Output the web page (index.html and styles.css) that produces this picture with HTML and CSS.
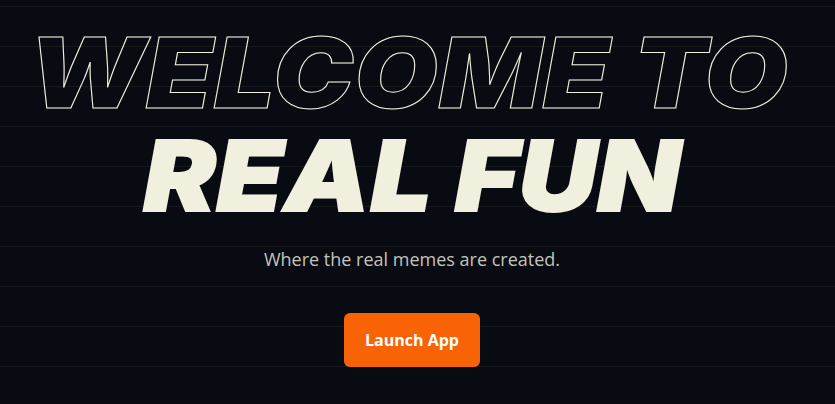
FILE: index.html
```html
<!DOCTYPE html>
<html lang="en">
<head>
<meta charset="utf-8">
<title>Real Fun</title>
<link rel="stylesheet" href="styles.css">
</head>
<body>
<main class="hero">
  <h1 class="title">
    <span class="line outline">WELCOME TO</span>
    <span class="line solid">REAL FUN</span>
  </h1>
  <p class="tagline">Where the real memes are created.</p>
  <a class="cta" href="#">Launch App</a>
</main>
</body>
</html>
```
FILE: styles.css
```css
* { box-sizing: border-box; }
html, body { margin: 0; height: 100%; }
body {
  background-color: #080b11;
  background-image: repeating-linear-gradient(to bottom, transparent 0, transparent 6px, #16181b 6px, #16181b 7px, transparent 7px, transparent 40px);
  overflow: hidden;
}
.hero {
  display: flex;
  flex-direction: column;
  align-items: center;
  padding: 23px 11px 0 0;
}
.title {
  margin: 0;
  display: flex;
  flex-direction: column;
  align-items: center;
  gap: 3px;
  font-family: Inter, "Liberation Sans", sans-serif;
  font-weight: 900;
  font-style: italic;
  font-size: 98px;
  line-height: 100px;
  white-space: nowrap;
}
.line {
  display: block;
  transform: scaleX(1.1);
}
.outline {
  margin-right: 7px;
  color: transparent;
  -webkit-text-stroke: 1px #f1f0df;
  letter-spacing: 0.8px;
}
.solid {
  color: #f1f0df;
  -webkit-text-stroke: 2px #f1f0df;
  letter-spacing: 0.75px;
}
.tagline {
  margin: 20px 0 0;
  font-family: "Open Sans", "Noto Sans", sans-serif;
  font-size: 18px;
  line-height: 26px;
  color: #c3c4bb;
}
.cta {
  margin-top: 41px;
  width: 136px;
  height: 54px;
  display: flex;
  align-items: center;
  justify-content: center;
  background: #f86405;
  border-radius: 6px;
  color: #fff;
  font-family: "Open Sans", "Noto Sans", sans-serif;
  font-weight: 700;
  font-size: 16px;
  text-decoration: none;
}
```
